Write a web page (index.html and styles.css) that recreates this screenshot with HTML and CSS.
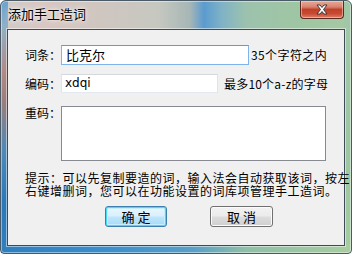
FILE: index.html
```html
<!DOCTYPE html>
<html>
<head>
<meta charset="utf-8">
<link rel="stylesheet" href="styles.css">
</head>
<body>
<div class="window">
  <div class="titlebar">
    <span class="title">添加手工造词</span>
    <div class="close">
      <svg width="14" height="11" viewBox="0 0 14 11">
        <path d="M2 1 L5 1 L7 3.5 L9 1 L12 1 L8.5 5.5 L12 10 L9 10 L7 7.5 L5 10 L2 10 L5.5 5.5 Z" fill="#fff" stroke="#3a3a3a" stroke-width="1" stroke-linejoin="round"/>
      </svg>
    </div>
  </div>
  <div class="client">
    <div class="row row1">
      <span class="label">词条：</span>
      <div class="input focus wide">比克尔</div>
      <span class="note n1">35个字符之内</span>
    </div>
    <div class="row row2">
      <span class="label">编码：</span>
      <div class="input narrow latin">xdqi</div>
      <span class="note n2">最多10个a-z的字母</span>
    </div>
    <div class="row row3">
      <span class="label">重码：</span>
      <div class="area"></div>
    </div>
    <div class="hint">
      <span class="hline">提示：可以先复制要造的词，输入法会自动获取该词，按左</span>
      <span class="hline">右键增删词，您可以在功能设置的词库项管理手工造词。</span>
    </div>
    <div class="buttons">
      <div class="btn default">确 定</div>
      <div class="btn">取 消</div>
    </div>
  </div>
</div>
</body>
</html>
```
FILE: styles.css
```css
html, body {
  margin: 0;
  padding: 0;
  background: #ffffff;
}
body {
  font-family: "Noto Sans CJK SC", "Noto Sans", sans-serif;
  font-size: 12px;
  color: #000;
}
.window {
  width: 352px;
  height: 254px;
  box-sizing: border-box;
  border: 1px solid #4a5a66;
  border-radius: 6px 6px 4px 4px;
  background:
    linear-gradient(90deg, #2f7fbf 0%, #3a8fcc 30%, #5aa0c8 55%, #8fc0a8 70%, #a8cda0 100%) left bottom / 100% 9px no-repeat,
    linear-gradient(180deg, #6aa2cf 0%, #8fb0c8 10%, #b08a86 28%, #9a7e7c 40%, #4d89b8 60%, #2c78b8 80%, #2f7fbf 100%) left top / 7px 100% no-repeat,
    linear-gradient(180deg, #a0c8a8 0%, #9cc6a2 60%, #a4cca0 100%) right top / 7px 100% no-repeat,
    linear-gradient(90deg, #cfcbc6 0%, #d8c6c2 12%, #cfc6c0 30%, #c6c8c0 45%, #a6b6b6 54%, #5b9bd0 58%, #7fb2c6 63%, #9cc2ae 70%, #9fc6a2 85%, #a6c9a2 100%);
  display: flex;
  flex-direction: column;
  overflow: hidden;
  box-shadow: inset 0 0 0 1px rgba(255,255,255,0.45);
}
.titlebar {
  height: 28px;
  position: relative;
  display: flex;
  align-items: flex-start;
}
.title {
  margin: 5px 0 0 7px;
  font-size: 13px;
  line-height: 15px;
  color: #000;
  text-shadow: 0 0 6px rgba(255,255,255,0.9), 0 0 3px rgba(255,255,255,0.9);
}
.close {
  position: absolute;
  right: 7px;
  top: 0;
  width: 44px;
  height: 18px;
  box-sizing: border-box;
  border: 1px solid #5a2a22;
  border-top: none;
  border-radius: 0 0 4px 4px;
  background: linear-gradient(180deg, #e8a898 0%, #d9836e 35%, #c0402a 50%, #c84a32 75%, #e0806a 100%);
  box-shadow: inset 0 0 0 1px rgba(255,220,210,0.5);
  display: flex;
  align-items: center;
  justify-content: center;
}
.close svg { display: block; }
.client {
  margin: 0 6px 0 6px;
  height: 217px;
  box-sizing: border-box;
  border: 1px solid #3e4b56;
  background: #f0f0f0;
  padding: 15px 0 0 17px;
  box-shadow: 0 0 0 1px rgba(255,255,255,0.5);
}
.row {
  display: flex;
  align-items: flex-start;
}
.label {
  width: 36px;
  line-height: 20px;
  flex: none;
}
.input {
  height: 20px;
  box-sizing: border-box;
  background: #fff;
  padding: 0 0 0 4px;
  line-height: 18px;
  font-size: 13px;
}
.wide {
  width: 188px;
  border: 1px solid #7eb4ea;
  border-top-color: #569de5;
}
.narrow {
  width: 157px;
  height: 19px;
  border: 1px solid #e2e3ea;
  border-top-color: #d5d8df;
  border-bottom-color: #e3e9ef;
}
.latin {
  font-family: "DejaVu Sans", sans-serif;
  font-size: 12px;
  color: #000;
  line-height: 17px;
  padding-left: 3px;
}
.note {
  line-height: 20px;
}
.n1 { margin-left: 2px; letter-spacing: 0.4px; }
.n2 { margin-left: 6px; letter-spacing: 0.2px; line-height: 19px; }
.row2 { margin-top: 9px; }
.row2 .label { line-height: 19px; }
.row3 { margin-top: 13px; }
.row3 .label { line-height: 14px; }
.area {
  width: 265px;
  height: 55px;
  box-sizing: border-box;
  border: 1px solid #878a90;
  background: #fff;
}
.hint {
  margin: 10px 0 0 0;
  display: flex;
  flex-direction: column;
}
.hline {
  display: block;
  height: 13px;
  line-height: 13px;
  font-size: 12px;
  letter-spacing: 0.5px;
  white-space: nowrap;
}
.buttons {
  display: flex;
  gap: 43px;
  margin: 9px 0 0 80px;
}
.btn {
  width: 63px;
  height: 21px;
  box-sizing: border-box;
  border: 1px solid #707070;
  border-radius: 3px;
  background: linear-gradient(180deg, #f2f2f2 0%, #ebebeb 48%, #dddddd 52%, #cfcfcf 100%);
  box-shadow: inset 0 0 0 1px #fbfbfb;
  text-align: center;
  line-height: 19px;
  font-size: 13px;
}
.btn.default {
  width: 62px;
  border-color: #3c7fb1;
  box-shadow: inset 0 0 0 1px #48d8fb, inset 0 0 0 2px #c6eefc;
  background: linear-gradient(180deg, #eaf6fd 0%, #d9f0fc 48%, #bee6fd 52%, #a7d9f5 100%);
}
```
